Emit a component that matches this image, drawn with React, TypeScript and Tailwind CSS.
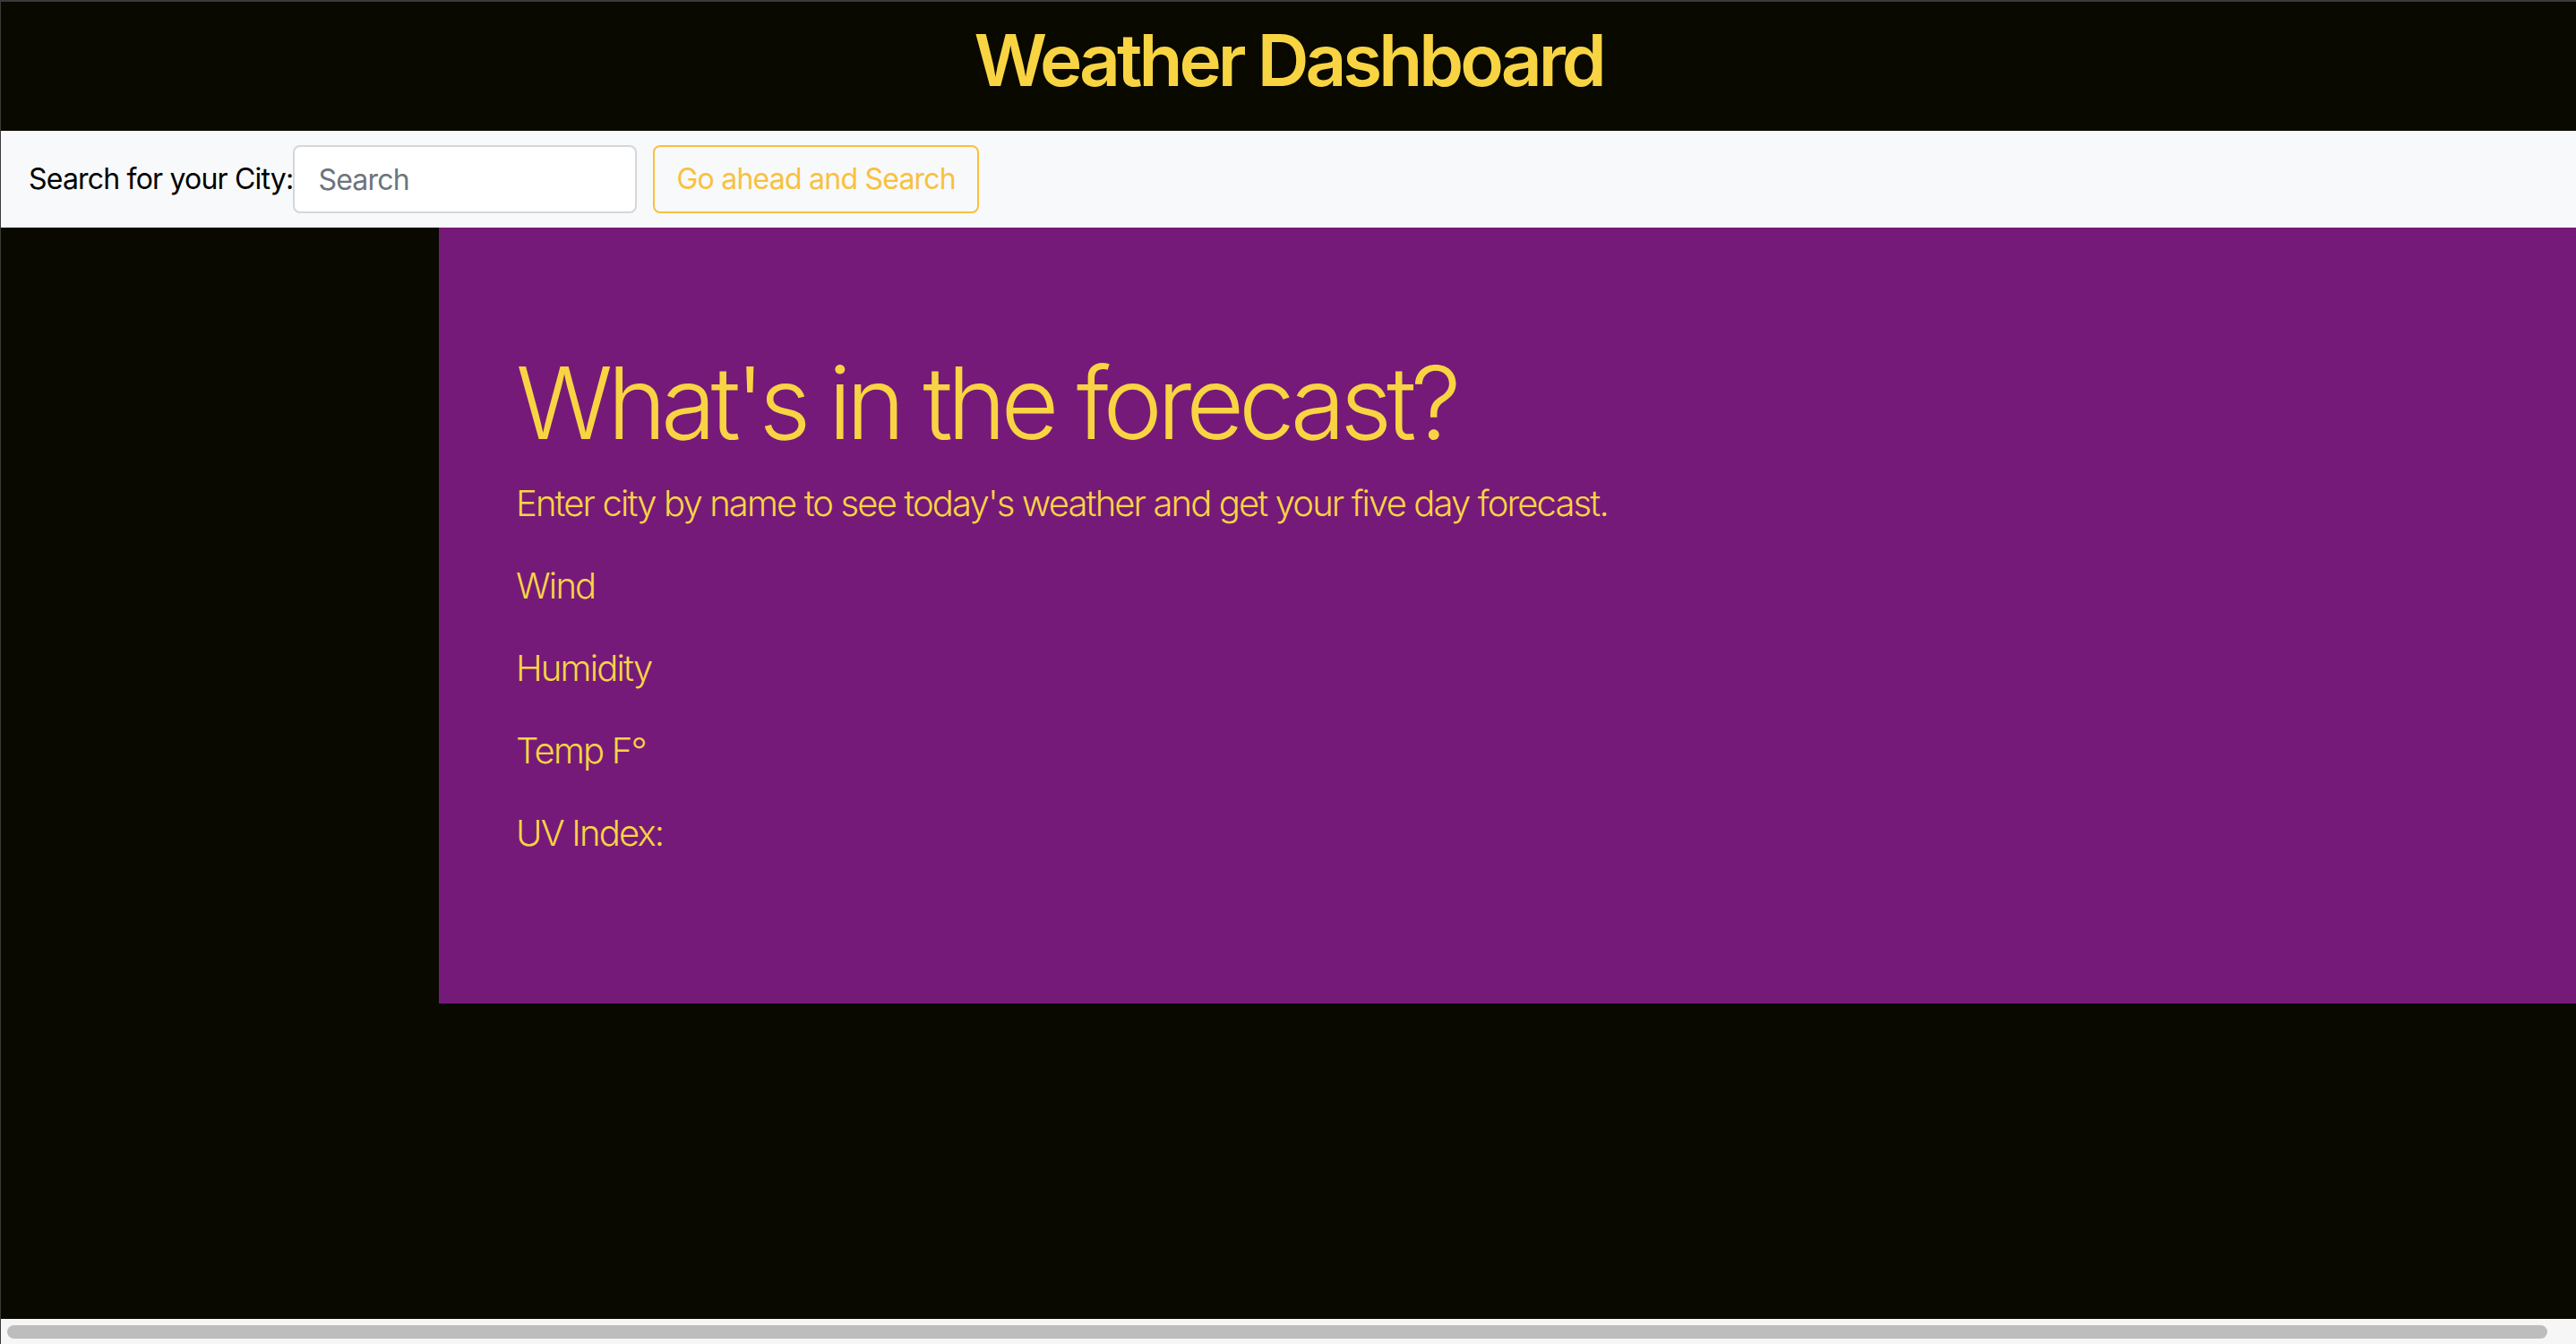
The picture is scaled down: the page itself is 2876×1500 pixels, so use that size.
export default function App() {
  const font = { fontFamily: "Inter, 'Liberation Sans', sans-serif" };
  return (
    <div
      className="flex h-[1500px] w-[2876px] flex-col overflow-hidden border-l border-t-2 border-[#3a3a3a] bg-[#090900]"
      style={font}
    >
      <header className="flex h-[144px] shrink-0 items-center justify-center pb-[14px]">
        <h1 className="text-[80px] font-semibold leading-none tracking-[-0.05em] text-[#f8d443]">Weather Dashboard</h1>
      </header>

      <nav className="flex h-[108px] shrink-0 items-center bg-[#f8f9fa] pl-[31px]">
        <label className="text-[32px] tracking-[-0.025em] text-black">Search for your City:</label>
        <input
          className="h-[76px] w-[384px] rounded-[8px] border-2 border-[#d3d7db] bg-white px-[26px] text-[32px] tracking-[-0.025em] text-[#495057] placeholder:text-[#6c757d] focus:outline-none"
          placeholder="Search"
        />
        <button className="ml-[18px] h-[76px] rounded-[8px] border-2 border-[#f8c13e] px-[24px] text-[32px] tracking-[-0.024em] text-[#f8c13e]">
          Go ahead and Search
        </button>
      </nav>

      <main className="flex-1">
        <section className="ml-[489px] bg-[#761a7a] pb-[128px] pl-[86px] pt-[128px] text-[#f8d443]">
          <h1 className="mb-[16px] text-[112px] font-light leading-[1.2] tracking-[-0.054em]">What's in the forecast?</h1>
          <p className="mb-[32px] text-[40px] font-light leading-[1.5] tracking-[-0.047em]">
            Enter city by name to see today's weather and get your five day forecast.
          </p>
          <p className="mb-[32px] text-[40px] font-light leading-[1.5] tracking-[-0.045em]">Wind</p>
          <p className="mb-[32px] text-[40px] font-light leading-[1.5] tracking-[-0.045em]">Humidity</p>
          <p className="mb-[32px] text-[40px] font-light leading-[1.5] tracking-[-0.045em]">Temp F°</p>
          <p className="mb-[32px] text-[40px] font-light leading-[1.5] tracking-[-0.045em]">UV Index:</p>
        </section>
      </main>

      {/* horizontal scrollbar */}
      <div className="flex h-[28px] shrink-0 items-center bg-[#f6f6f6] px-[7px]">
        <div className="h-[15px] w-[2836px] rounded-full bg-[#bdbdbd]" />
      </div>
    </div>
  );
}
